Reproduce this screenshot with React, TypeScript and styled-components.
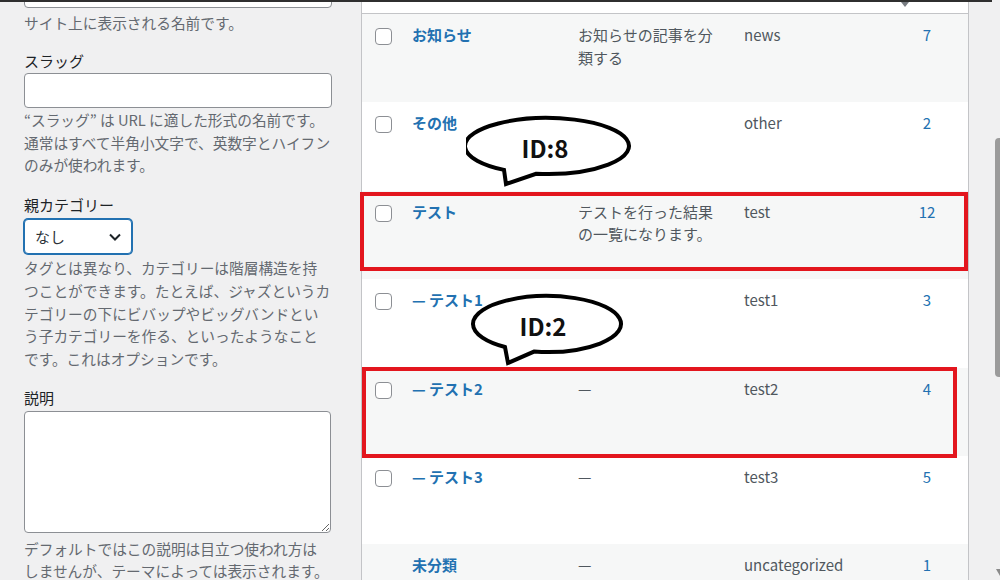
import { FC, Fragment } from 'react';
import styled, { createGlobalStyle } from 'styled-components';

const GlobalStyle = createGlobalStyle`
  html, body {
    margin: 0;
    padding: 0;
    background: #f0f0f1;
    font-family: "Noto Sans CJK JP", "Noto Sans", sans-serif;
    font-size: 15px;
    line-height: 22.5px;
    color: #50575e;
  }
  * { box-sizing: border-box; }
`;

const Page = styled.div`
  width: 1000px;
  height: 580px;
  overflow: hidden;
  display: flex;
`;

const Main = styled.div`
  flex: 1;
  display: flex;
  gap: 29px;
  padding-left: 24px;
  border-top: 2px solid #2f2f2f;
  overflow: hidden;
`;

const FormColumn = styled.div`
  width: 308px;
  flex-shrink: 0;
  display: flex;
  flex-direction: column;
`;

const Field = styled.div<{ space: number }>`
  display: flex;
  flex-direction: column;
  margin-top: ${({ space }) => space}px;
`;

const Label = styled.label`
  color: #1d2327;
  margin-bottom: 1px;
`;

const TextInput = styled.input`
  width: 308px;
  height: 35px;
  border: 1px solid #8c8f94;
  border-radius: 4px;
  background: #fff;
  font: inherit;
  margin: 0;
`;

const TextArea = styled.textarea`
  width: 307px;
  height: 122px;
  border: 1px solid #8c8f94;
  border-radius: 4px;
  background: #fff;
  font: inherit;
  resize: both;
  margin: 0;
  display: block;
`;

const SelectBox = styled.div`
  width: 108px;
  height: 35px;
  margin-top: 2px;
  border: 1px solid #2271b1;
  box-shadow: 0 0 0 1px #2271b1;
  border-radius: 4px;
  background: #fff;
  display: flex;
  align-items: center;
  justify-content: space-between;
  padding: 0 9px 0 10px;
  color: #2c3338;
`;

const Help = styled.p<{ gap?: number }>`
  margin: ${({ gap }) => gap ?? 1}px 0 0;
  color: #646970;
  font-size: 14.7px;
  line-height: 22.6px;
  white-space: nowrap;
`;

const TableWrap = styled.div`
  position: relative;
  width: 608px;
  flex-shrink: 0;
  border-left: 1px solid #c3c4c7;
  border-right: 1px solid #c3c4c7;
  background: #fff;
  align-self: stretch;
`;

const cols = '42px 166px 166px 150px 1fr';

const Header = styled.div`
  height: 12px;
  display: grid;
  grid-template-columns: ${cols};
  border-bottom: 1px solid #c3c4c7;
  background: #fff;
`;

const SortArrow = styled.span`
  grid-column: 5;
  margin-left: 15px;
  width: 0;
  height: 0;
  border-left: 4px solid transparent;
  border-right: 4px solid transparent;
  border-top: 5px solid #787c82;
`;

const Row = styled.div<{ striped: boolean }>`
  height: 88.4px;
  display: grid;
  grid-template-columns: ${cols};
  align-items: start;
  background: ${({ striped }) => (striped ? '#f6f7f7' : '#fff')};
`;

const CheckCell = styled.div`
  padding: 14px 0 0 13px;
`;

const Checkbox = styled.span`
  display: block;
  width: 17px;
  height: 17px;
  border: 1px solid #8c8f94;
  border-radius: 4px;
  background: #fff;
`;

const Cell = styled.div<{ center?: boolean }>`
  padding: 10px 12px 0 8px;
  text-align: ${({ center }) => (center ? 'center' : 'left')};
  ${({ center }) => center && 'padding: 10px 0 0;'}
`;

const NameLink = styled.a`
  color: #2271b1;
  font-weight: 700;
  text-decoration: none;
`;

const CountLink = styled.a`
  color: #2271b1;
  text-decoration: none;
`;

const Highlight = styled.div<{ left: number; top: number; w: number; h: number }>`
  position: absolute;
  left: ${({ left }) => left}px;
  top: ${({ top }) => top}px;
  width: ${({ w }) => w}px;
  height: ${({ h }) => h}px;
  border: 4px solid #e3161e;
  pointer-events: none;
`;

const BubbleWrap = styled.div<{ left: number; top: number; w: number; h: number }>`
  position: absolute;
  left: ${({ left }) => left}px;
  top: ${({ top }) => top}px;
  width: ${({ w }) => w}px;
  height: ${({ h }) => h}px;
`;

const BubbleText = styled.span<{ cx: number; cy: number }>`
  position: absolute;
  left: ${({ cx }) => cx}px;
  top: ${({ cy }) => cy}px;
  transform: translate(-50%, -50%);
  font-family: "Noto Sans CJK JP", "Noto Sans", sans-serif;
  font-weight: 700;
  font-size: 24px;
  line-height: 1;
  color: #111;
  white-space: nowrap;
`;

const ScrollTrack = styled.div`
  width: 8px;
  height: 580px;
  display: flex;
  flex-direction: column;
  align-items: flex-end;
  padding-top: 138px;
`;

const ScrollThumb = styled.div`
  width: 5px;
  height: 239px;
  background: #9b9b9b;
  border-radius: 4px 0 0 4px;
`;

const ScrollArrow = styled.div`
  margin-top: auto;
  margin-bottom: 4px;
  width: 0;
  height: 0;
  border-left: 4px solid transparent;
  border-top: 7px solid #8a8a8a;
`;

type TBubble = {
  label: string,
  left: number,
  top: number,
  w: number,
  h: number,
  cx: number,
  cy: number,
  rx: number,
  ry: number,
  ax: number,
  bx: number,
  tip: [number, number],
  textX: number,
};

const Bubble: FC<TBubble> = ({ label, left, top, w, h, cx, cy, rx, ry, ax, bx, tip, textX }) => {
  const ay = cy + ry * Math.sqrt(1 - ((ax - cx) / rx) ** 2);
  const by = cy + ry * Math.sqrt(1 - ((bx - cx) / rx) ** 2);
  const d = `M ${ax} ${ay} A ${rx} ${ry} 0 1 1 ${bx} ${by} L ${tip[0]} ${tip[1]} Z`;
  return (
    <BubbleWrap left={left} top={top} w={w} h={h}>
      <svg width={w} height={h} viewBox={`0 0 ${w} ${h}`} style={{ position: 'absolute', inset: 0 }}>
        <path d={d} fill="#fff" stroke="#000" strokeWidth={4} />
      </svg>
      <BubbleText cx={textX} cy={cy + 2}>{label}</BubbleText>
    </BubbleWrap>
  );
};

// helper text broken into the same lines as the screen
const Lines: FC<{ lines: string[] }> = ({ lines }) => (
  <>
    {lines.map((l, i) => (
      <Fragment key={l}>
        {i > 0 && <br />}
        {l}
      </Fragment>
    ))}
  </>
);

type TCategory = {
  name: string,
  desc: string,
  slug: string,
  count: number,
  checkable: boolean,
};

const categories: TCategory[] = [
  { name: 'お知らせ', desc: 'お知らせの記事を分類する', slug: 'news', count: 7, checkable: true },
  { name: 'その他', desc: '', slug: 'other', count: 2, checkable: true },
  { name: 'テスト', desc: 'テストを行った結果の一覧になります。', slug: 'test', count: 12, checkable: true },
  { name: '— テスト1', desc: '', slug: 'test1', count: 3, checkable: true },
  { name: '— テスト2', desc: '—', slug: 'test2', count: 4, checkable: true },
  { name: '— テスト3', desc: '—', slug: 'test3', count: 5, checkable: true },
  { name: '未分類', desc: '—', slug: 'uncategorized', count: 1, checkable: false },
];

const App: FC = () => (
  <>
    <GlobalStyle />
    <Page>
      <Main>
        <FormColumn>
          <Field space={-29}>
            <TextInput type="text" />
            <Help gap={4}>サイト上に表示される名前です。</Help>
          </Field>
          <Field space={15}>
            <Label>スラッグ</Label>
            <TextInput type="text" />
            <Help>
              <Lines lines={[
                '“スラッグ” は URL に適した形式の名前です。',
                '通常はすべて半角小文字で、英数字とハイフン',
                'のみが使われます。',
              ]} />
            </Help>
          </Field>
          <Field space={17}>
            <Label>親カテゴリー</Label>
            <SelectBox>
              <span>なし</span>
              <svg width="14" height="14" viewBox="0 0 14 14">
                <path d="M2 4.5 L7 9.5 L12 4.5" fill="none" stroke="#1d2327" strokeWidth="2" />
              </svg>
            </SelectBox>
            <Help gap={3}>
              <Lines lines={[
                'タグとは異なり、カテゴリーは階層構造を持',
                'つことができます。たとえば、ジャズというカ',
                'テゴリーの下にビバップやビッグバンドとい',
                'う子カテゴリーを作る、といったようなこと',
                'です。これはオプションです。',
              ]} />
            </Help>
          </Field>
          <Field space={17}>
            <Label>説明</Label>
            <TextArea />
            <Help gap={5}>
              <Lines lines={[
                'デフォルトではこの説明は目立つ使われ方は',
                'しませんが、テーマによっては表示されます。',
              ]} />
            </Help>
          </Field>
        </FormColumn>

        <TableWrap>
          <Header>
            <SortArrow />
          </Header>
          {categories.map((c, i) => (
            <Row key={c.slug} striped={i % 2 === 0}>
              <CheckCell>{c.checkable && <Checkbox />}</CheckCell>
              <Cell><NameLink>{c.name}</NameLink></Cell>
              <Cell>{c.desc}</Cell>
              <Cell>{c.slug}</Cell>
              <Cell center><CountLink>{c.count}</CountLink></Cell>
            </Row>
          ))}

          <Highlight left={-2} top={190} w={608} h={79} />
          <Highlight left={0} top={365} w={595} h={91} />

          <Bubble label="ID:8" left={104} top={111} w={180} h={76}
            cx={81} cy={33} rx={82} ry={28} ax={38} bx={70} tip={[40, 71]} textX={79} />
          <Bubble label="ID:2" left={107} top={288} w={162} h={78}
            cx={78} cy={34} rx={74} ry={28} ax={36} bx={65} tip={[39, 73]} textX={74} />
        </TableWrap>
      </Main>
      <ScrollTrack>
        <ScrollThumb />
        <ScrollArrow />
      </ScrollTrack>
    </Page>
  </>
);

export default App;
